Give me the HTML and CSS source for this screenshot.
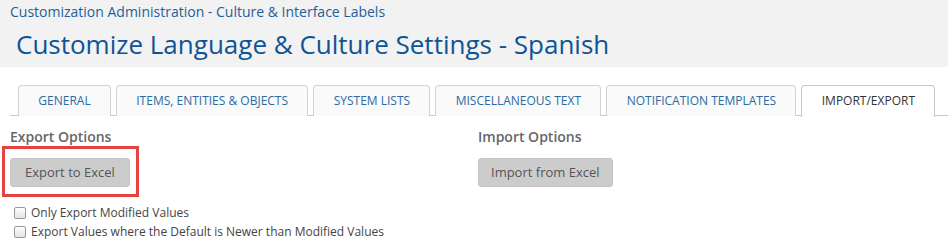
FILE: index.html
```html
<!DOCTYPE html>
<html>
<head>
<meta charset="utf-8">
<link rel="stylesheet" href="styles.css">
</head>
<body>
<header class="page-header">
  <div class="breadcrumb">Customization Administration - Culture &amp; Interface Labels</div>
  <h1 class="title">Customize Language &amp; Culture Settings - Spanish</h1>
</header>
<nav class="tabs">
  <div class="tab">GENERAL</div>
  <div class="tab">ITEMS, ENTITIES &amp; OBJECTS</div>
  <div class="tab">SYSTEM LISTS</div>
  <div class="tab">MISCELLANEOUS TEXT</div>
  <div class="tab">NOTIFICATION TEMPLATES</div>
  <div class="tab active">IMPORT/EXPORT</div>
</nav>
<main class="panels">
  <section class="panel export">
    <h2 class="panel-title">Export Options</h2>
    <div class="highlight">
      <button class="btn btn-export">Export to Excel</button>
    </div>
    <label class="check"><span class="box"></span>Only Export Modified Values</label>
    <label class="check"><span class="box"></span>Export Values where the Default is Newer than Modified Values</label>
  </section>
  <section class="panel import">
    <h2 class="panel-title">Import Options</h2>
    <div class="btn-wrap">
      <button class="btn">Import from Excel</button>
    </div>
  </section>
</main>
</body>
</html>
```
FILE: styles.css
```css
* { box-sizing: border-box; }
body {
  margin: 0;
  font-family: "Open Sans", "Liberation Sans", sans-serif;
  background: #fff;
  width: 948px;
  height: 251px;
  overflow: hidden;
}
.page-header {
  background: #f2f2f2;
  height: 67px;
  padding: 2px 0 0 10px;
}
.breadcrumb {
  font-size: 14px;
  line-height: 20px;
  color: #1f5f99;
}
.title {
  margin: 4px 0 0 6px;
  font-size: 26px;
  font-weight: 400;
  line-height: 36px;
  color: #0e5494;
}
.tabs {
  display: flex;
  gap: 5px;
  margin: 18px 0 0 10px;
  padding-left: 8px;
  border-bottom: 1px solid #c8c8c8;
  height: 31px;
}
.tab {
  height: 31px;
  padding: 0 19.3px;
  border: 1px solid #d2d2d2;
  border-bottom: none;
  border-radius: 4px 4px 0 0;
  background: #fafafa;
  font-size: 12px;
  line-height: 30px;
  color: #2c6aa0;
}
.tab.active {
  background: #fff;
  height: 32px;
  border-color: #c8c8c8;
  color: #333;
}
.panels {
  display: flex;
  padding-left: 10px;
}
.panel.export { width: 468px; }
.panel-title {
  margin: 12px 0 0 0;
  font-size: 14px;
  font-weight: 600;
  line-height: 18px;
  color: #666;
}
.highlight {
  margin: 0 0 0 -8px;
  width: 137px;
  height: 51px;
  border: 3px solid #e5423d;
  padding: 9px 0 0 5px;
}
.btn-wrap { margin-top: 12px; }
.btn {
  font-family: inherit;
  font-size: 13px;
  color: #555;
  background: #cccccc;
  border: 1px solid #c4c4c4;
  border-radius: 3px;
  height: 29px;
  padding: 0 12px;
  line-height: 27px;
}
.btn-export { padding: 0 14px; }
.check {
  display: flex;
  align-items: center;
  font-size: 12px;
  line-height: 19px;
  color: #444;
  margin-left: 4px;
}
.check:first-of-type { margin-top: 6px; }
.box {
  width: 12px;
  height: 12px;
  border: 1px solid #999;
  border-radius: 2px;
  background: linear-gradient(#fdfdfd, #e4e4e4);
  margin-right: 5px;
}
```
